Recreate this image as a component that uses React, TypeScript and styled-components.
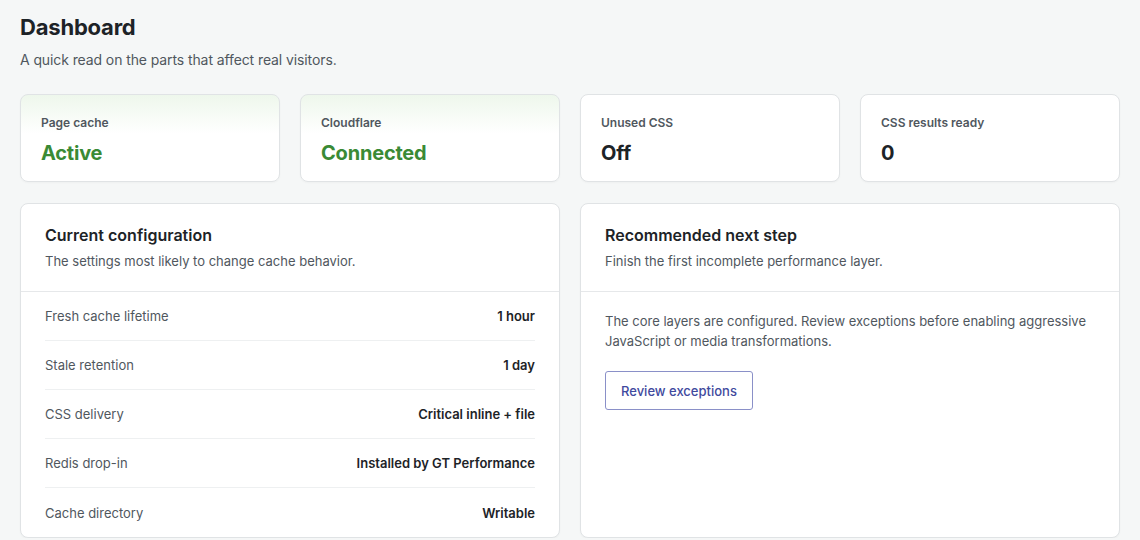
import styled, { createGlobalStyle, css } from 'styled-components'

const GlobalStyle = createGlobalStyle`
  html, body {
    margin: 0;
    background: #f5f7f7;
  }
  body {
    font-family: Inter, 'Liberation Sans', sans-serif;
    color: #1d2327;
    -webkit-font-smoothing: antialiased;
  }
  * { box-sizing: border-box; }
`

type Tone = 'success' | 'neutral'

interface Stat {
  label: string
  value: string
  tone: Tone
}

const stats: Stat[] = [
  { label: 'Page cache', value: 'Active', tone: 'success' },
  { label: 'Cloudflare', value: 'Connected', tone: 'success' },
  { label: 'Unused CSS', value: 'Off', tone: 'neutral' },
  { label: 'CSS results ready', value: '0', tone: 'neutral' },
]

const config = [
  { label: 'Fresh cache lifetime', value: '1 hour' },
  { label: 'Stale retention', value: '1 day' },
  { label: 'CSS delivery', value: 'Critical inline + file' },
  { label: 'Redis drop-in', value: 'Installed by GT Performance' },
  { label: 'Cache directory', value: 'Writable' },
]

const Page = styled.main`
  padding: 12px 20px 0;
`

const Heading = styled.h1`
  margin: 0;
  font-size: 22px;
  line-height: 30px;
  font-weight: 700;
  letter-spacing: -0.2px;
`

const Lead = styled.p`
  margin: 8px 0 0;
  font-size: 14px;
  line-height: 20px;
  letter-spacing: -0.1px;
  color: #50575e;
`

const StatGrid = styled.section`
  display: grid;
  grid-template-columns: repeat(4, 1fr);
  gap: 20px;
  margin-top: 24px;
`

const StatCard = styled.div<{ $tone: Tone }>`
  height: 88px;
  padding: 20px 20px 0;
  background: #fff;
  border: 1px solid #e0e3e5;
  border-radius: 8px;
  box-shadow: 0 1px 2px rgba(0, 0, 0, 0.03);
  ${({ $tone }) =>
    $tone === 'success' &&
    css`
      background: linear-gradient(180deg, #eef7ec 0%, #ffffff 45%);
    `}
`

const StatLabel = styled.div`
  font-size: 12px;
  line-height: 16px;
  font-weight: 600;
  color: #50575e;
`

const StatValue = styled.div<{ $tone: Tone }>`
  margin-top: 8px;
  font-size: 20px;
  line-height: 28px;
  font-weight: 700;
  letter-spacing: -0.2px;
  color: ${({ $tone }) => ($tone === 'success' ? '#3a8a35' : '#1d2327')};
`

const PanelGrid = styled.section`
  display: grid;
  grid-template-columns: repeat(2, 1fr);
  gap: 20px;
  margin-top: 21px;
  align-items: stretch;
`

const Panel = styled.div`
  background: #fff;
  border: 1px solid #e0e3e5;
  border-radius: 8px;
  box-shadow: 0 1px 2px rgba(0, 0, 0, 0.03);
  overflow: hidden;
`

const PanelHeader = styled.header`
  height: 88px;
  padding: 20px 24px 0;
  border-bottom: 1px solid #e6e8ea;
`

const PanelTitle = styled.h2`
  margin: 0;
  font-size: 16px;
  line-height: 22px;
  font-weight: 600;
`

const PanelSub = styled.p`
  margin: 6px 0 0;
  font-size: 13px;
  line-height: 18px;
  color: #50575e;
`

const RowList = styled.dl`
  margin: 0;
  padding: 0 24px;
`

const Row = styled.div`
  display: flex;
  align-items: center;
  justify-content: space-between;
  height: 49px;
  border-bottom: 1px solid #eef0f1;

  &:last-child {
    border-bottom: 0;
  }
`

const RowLabel = styled.dt`
  font-size: 13px;
  color: #50575e;
`

const RowValue = styled.dd`
  margin: 0;
  font-size: 13px;
  font-weight: 600;
  color: #1d2327;
`

const PanelBody = styled.div`
  padding: 19px 24px;
`

const BodyText = styled.p`
  margin: 0;
  font-size: 13px;
  line-height: 20px;
  color: #50575e;
`

const OutlineButton = styled.button`
  margin-top: 20px;
  height: 39px;
  padding: 0 15px;
  background: #fff;
  border: 1px solid #8a90c8;
  border-radius: 3px;
  font-family: inherit;
  font-size: 13px;
  font-weight: 500;
  color: #3f4a9e;
  cursor: pointer;
`

export default function App() {
  return (
    <>
      <GlobalStyle />
      <Page>
        <Heading>Dashboard</Heading>
        <Lead>A quick read on the parts that affect real visitors.</Lead>

        <StatGrid>
          {stats.map((s) => (
            <StatCard key={s.label} $tone={s.tone}>
              <StatLabel>{s.label}</StatLabel>
              <StatValue $tone={s.tone}>{s.value}</StatValue>
            </StatCard>
          ))}
        </StatGrid>

        <PanelGrid>
          <Panel>
            <PanelHeader>
              <PanelTitle>Current configuration</PanelTitle>
              <PanelSub>The settings most likely to change cache behavior.</PanelSub>
            </PanelHeader>
            <RowList>
              {config.map((r) => (
                <Row key={r.label}>
                  <RowLabel>{r.label}</RowLabel>
                  <RowValue>{r.value}</RowValue>
                </Row>
              ))}
            </RowList>
          </Panel>

          <Panel>
            <PanelHeader>
              <PanelTitle>Recommended next step</PanelTitle>
              <PanelSub>Finish the first incomplete performance layer.</PanelSub>
            </PanelHeader>
            <PanelBody>
              <BodyText>
                The core layers are configured. Review exceptions before enabling aggressive JavaScript or
                media transformations.
              </BodyText>
              <OutlineButton type='button'>Review exceptions</OutlineButton>
            </PanelBody>
          </Panel>
        </PanelGrid>
      </Page>
    </>
  )
}
